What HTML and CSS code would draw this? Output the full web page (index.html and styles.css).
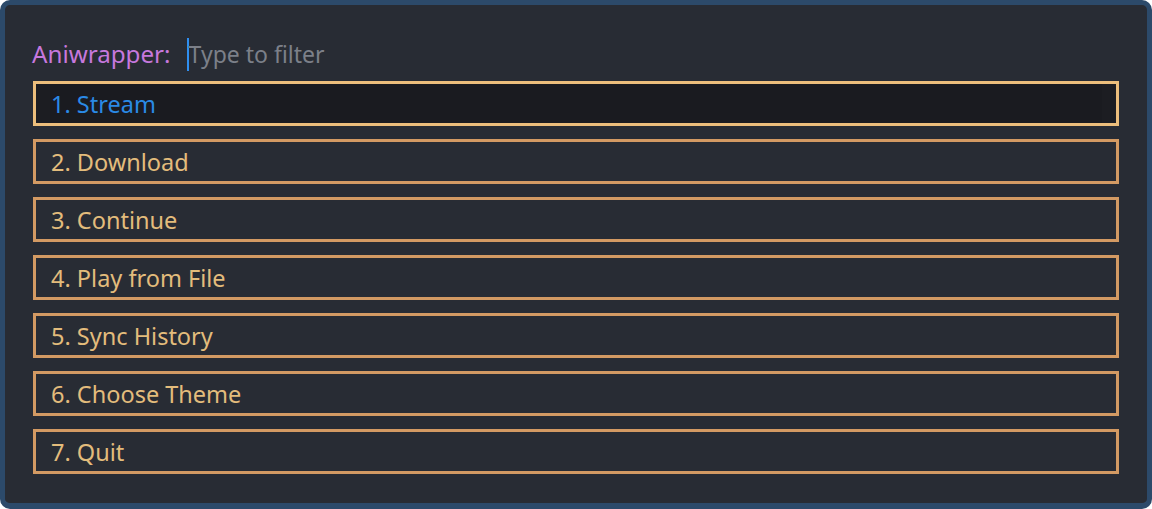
FILE: index.html
```html
<!DOCTYPE html>
<html>
<head>
<meta charset="utf-8">
<link rel="stylesheet" href="styles.css">
</head>
<body>
<div class="window">
  <div class="prompt">
    <span class="label">Aniwrapper:</span>
    <span class="input"><span class="cursor"></span><span class="placeholder">Type to filter</span></span>
  </div>
  <ul class="list">
    <li class="item selected"><span class="entry">1. Stream</span></li>
    <li class="item"><span class="entry">2. Download</span></li>
    <li class="item"><span class="entry">3. Continue</span></li>
    <li class="item"><span class="entry">4. Play from File</span></li>
    <li class="item"><span class="entry">5. Sync History</span></li>
    <li class="item"><span class="entry">6. Choose Theme</span></li>
    <li class="item"><span class="entry">7. Quit</span></li>
  </ul>
</div>
</body>
</html>
```
FILE: styles.css
```css
* { box-sizing: border-box; }
html, body { margin: 0; padding: 0; background: #ffffff; }
body {
  font-family: "Noto Sans", "Open Sans", sans-serif;
  font-size: 23.5px;
}
.window {
  width: 1152px;
  height: 509px;
  border: 5px solid #2c4a6a;
  border-bottom-width: 6px;
  border-radius: 10px;
  background: #282c34;
  padding: 32px 28px 0 28px;
}
.prompt {
  display: flex;
  align-items: center;
  height: 34px;
  margin-left: -1px;
  margin-bottom: 10px;
}
.label { color: #c678dd; font-size: 24.2px; padding-bottom: 1px; }
.input {
  display: flex;
  align-items: center;
  margin-left: 16px;
  height: 34px;
}
.cursor {
  width: 2px;
  height: 33px;
  background: #2f8ff0;
}
.placeholder { color: #7c8089; font-size: 23px; }
.list {
  list-style: none;
  margin: 0;
  padding: 0;
  display: flex;
  flex-direction: column;
  gap: 13px;
}
.item {
  height: 45px;
  border: 3px solid #d39a63;
  display: flex;
  align-items: stretch;
  padding: 0 14px;
  color: #e3bc7c;
}
.entry {
  flex: 1;
  display: flex;
  align-items: center;
  padding-left: 1px;
  padding-top: 1px;
}
.item.selected {
  border-color: #ecbe7c;
  background: #1c1d22;
}
.item.selected .entry {
  background: #1a1b20;
  color: #2a8ae6;
}
```
